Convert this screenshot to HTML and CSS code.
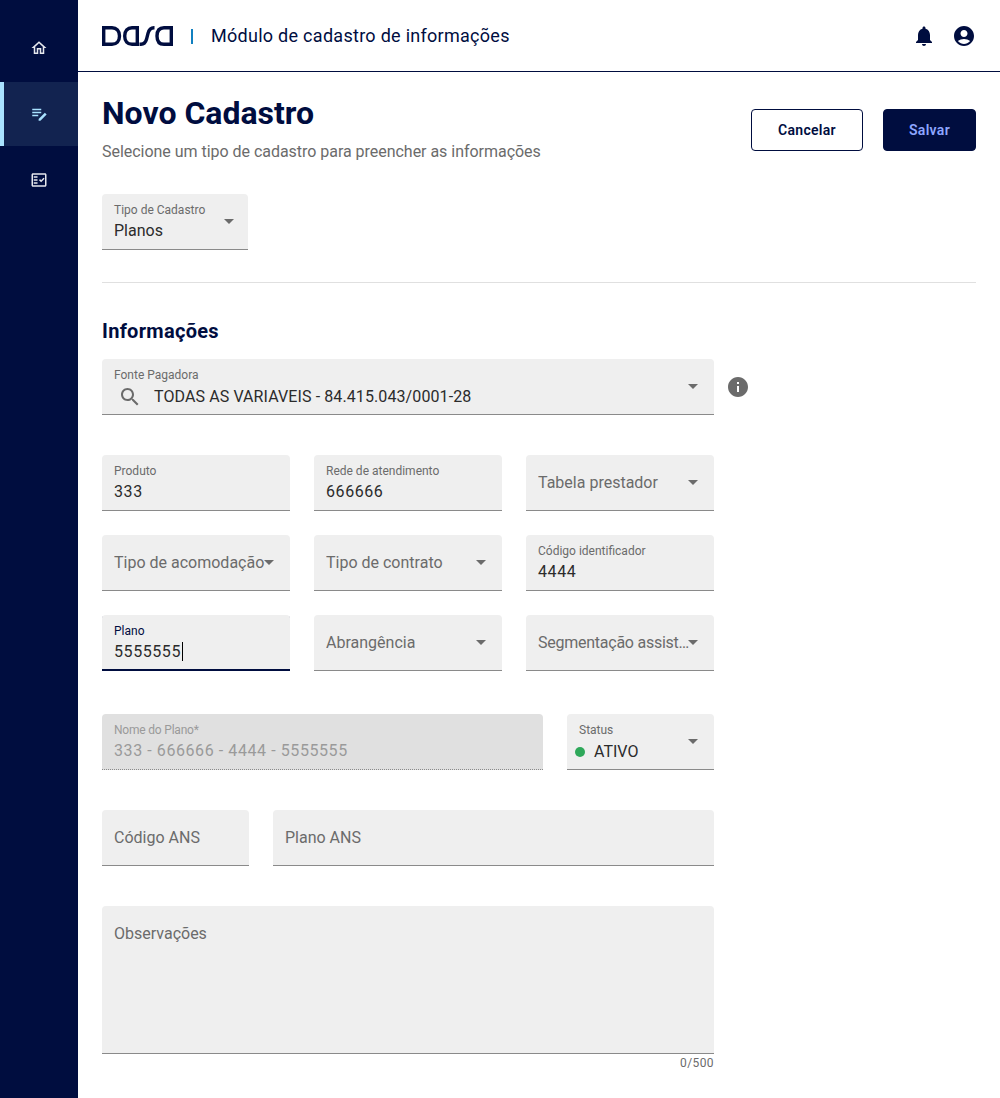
FILE: index.html
```html
<!DOCTYPE html>
<html lang="pt-BR">
<head>
<meta charset="utf-8">
<title>Novo Cadastro</title>
<link rel="stylesheet" href="styles.css">
</head>
<body>
<div class="app">
  <nav class="sidebar">
    <a class="nav-item"><svg class="icon-nav" viewBox="0 0 24 24"><path d="M12 5.690l5 4.500V18h-2v-6H9v6H7v-7.810l5-4.500M12 3L2 12h3v8h6v-6h2v6h6v-8h3L12 3z"/></svg></a>
    <a class="nav-item active"><svg class="icon-nav" viewBox="0 0 24 24"><path d="M3 5h12v2H3zM3 9h12v2H3zM3 13h8v2H3zM19.800 10.400l2.400 2.400-8.300 8.300h-2.400v-2.400z"/></svg></a>
    <a class="nav-item"><svg class="icon-nav" viewBox="0 0 24 24"><path fill-rule="evenodd" d="M20 3H4c-1.100 0-2 .9-2 2v14c0 1.100.9 2 2 2h16c1.100 0 2-.9 2-2V5c0-1.100-.9-2-2-2zm0 16H4V5h16v14z"/><path d="M19.410 10.420L17.990 9l-3.170 3.170-1.410-1.420L12 12.170 14.820 15zM5 7h5v2H5zM5 11h5v2H5zM5 15h5v2H5z"/></svg></a>
  </nav>
  <div class="content">
    <header class="topbar">
      <svg class="logo" viewBox="0 0 71 20"><path d="M1.700 1.700H10c4.500 0 7.500 3 7.500 8.300s-3 8.300-7.500 8.300H1.700z"/><path d="M35.300 1.700H30c-4.500 0-7.300 3-7.300 8.300s2.800 8.300 7.300 8.300h5.300z"/><path d="M37.500 18.300h1.500c3 0 4.500-1.500 5.500-5l1.500-6c1-3.800 2.500-5.600 6-5.600h.5"/><path d="M69.300 1.700H62c-4.500 0-7 3-7 8.300s2.500 8.300 7 8.300h7.300z"/></svg>
      <span class="brand-sep"></span>
      <span class="module-title">Módulo de cadastro de informações</span>
      <div class="top-actions">
        <svg class="icon-top" viewBox="0 0 24 24"><path d="M12 22c1.100 0 2-.9 2-2h-4c0 1.100.9 2 2 2zm6-6v-5c0-3.070-1.630-5.640-4.500-6.320V4c0-.83-.67-1.500-1.500-1.500s-1.500.67-1.500 1.500v.68C7.640 5.360 6 7.920 6 11v5l-2 2v1h16v-1l-2-2z"/></svg>
        <svg class="icon-top" viewBox="0 0 24 24"><path d="M12 2C6.480 2 2 6.480 2 12s4.480 10 10 10 10-4.480 10-10S17.520 2 12 2zm0 4c1.930 0 3.500 1.570 3.500 3.500S13.930 13 12 13s-3.500-1.570-3.500-3.500S10.070 6 12 6zm0 14c-2.030 0-4.430-.82-6.140-2.880C7.550 15.800 9.680 15 12 15s4.450.8 6.140 2.120C16.430 19.180 14.030 20 12 20z"/></svg>
      </div>
    </header>
    <main class="page">
      <div class="page-head">
        <div>
          <h1>Novo Cadastro</h1>
          <p class="subtitle">Selecione um tipo de cadastro para preencher as informações</p>
        </div>
        <div class="actions">
          <button class="btn btn-outline">Cancelar</button>
          <button class="btn btn-solid">Salvar</button>
        </div>
      </div>

      <div class="field w-type">
        <div class="field-body"><span class="label">Tipo de Cadastro</span><span class="value">Planos</span></div>
        <span class="caret"></span>
      </div>

      <hr class="divider">
      <h2>Informações</h2>

      <div class="form">
        <div class="source-row">
          <div class="field w-full">
            <div class="field-body">
              <span class="label">Fonte Pagadora</span>
              <span class="value with-icon"><svg class="icon-search" viewBox="0 0 24 24"><path d="M15.500 14h-.79l-.28-.27C15.410 12.590 16 11.110 16 9.500 16 5.910 13.090 3 9.500 3S3 5.910 3 9.500 5.910 16 9.500 16c1.610 0 3.090-.59 4.230-1.570l.27.28v.79l5 4.990L20.490 19l-4.990-5zm-6 0C7.010 14 5 11.990 5 9.500S7.010 5 9.500 5 14 7.010 14 9.500 11.990 14 9.500 14z"/></svg>TODAS AS VARIAVEIS - 84.415.043/0001-28</span>
            </div>
            <span class="caret"></span>
          </div>
          <svg class="icon-info" viewBox="0 0 24 24"><path d="M12 2C6.480 2 2 6.480 2 12s4.480 10 10 10 10-4.480 10-10S17.520 2 12 2zm1 15h-2v-6h2v6zm0-8h-2V7h2v2z"/></svg>
        </div>

        <div class="grid-3">
          <div class="field"><div class="field-body"><span class="label">Produto</span><span class="value num">333</span></div></div>
          <div class="field"><div class="field-body"><span class="label">Rede de atendimento</span><span class="value num">666666</span></div></div>
          <div class="field"><div class="field-body"><span class="placeholder">Tabela prestador</span></div><span class="caret"></span></div>
          <div class="field"><div class="field-body"><span class="placeholder">Tipo de acomodação</span></div><span class="caret"></span></div>
          <div class="field"><div class="field-body"><span class="placeholder">Tipo de contrato</span></div><span class="caret"></span></div>
          <div class="field"><div class="field-body"><span class="label">Código identificador</span><span class="value num">4444</span></div></div>
          <div class="field focused"><div class="field-body"><span class="label">Plano</span><span class="value num"><span class="typed">5555555</span></span></div></div>
          <div class="field"><div class="field-body"><span class="placeholder">Abrangência</span></div><span class="caret"></span></div>
          <div class="field"><div class="field-body"><span class="placeholder narrow">Segmentação assistencial</span></div><span class="caret"></span></div>
        </div>

        <div class="row-wide-left">
          <div class="field disabled"><div class="field-body"><span class="label">Nome do Plano*</span><span class="value num">333 - 666666 - 4444 - 5555555</span></div></div>
          <div class="field"><div class="field-body"><span class="label">Status</span><span class="value status"><i class="dot"></i>ATIVO</span></div><span class="caret"></span></div>
        </div>

        <div class="row-wide-right">
          <div class="field"><div class="field-body"><span class="placeholder">Código ANS</span></div></div>
          <div class="field"><div class="field-body"><span class="placeholder">Plano ANS</span></div></div>
        </div>

        <div class="textarea"><span class="placeholder">Observações</span></div>
        <div class="counter">0/500</div>
      </div>
    </main>
  </div>
</div>
</body>
</html>
```
FILE: styles.css
```css
* { box-sizing: border-box; }
html, body { margin: 0; padding: 0; }
body { font-family: "Roboto", "Liberation Sans", sans-serif; color: #2b2b2b; background: #fff; }
.app { display: flex; min-height: 1098px; }

.sidebar { width: 78px; flex: none; background: #000d3f; padding-top: 16px; display: flex; flex-direction: column; gap: 2px; }
.nav-item { height: 64px; display: flex; align-items: center; justify-content: center; }
.nav-item.active { background: #122350; box-shadow: inset 4px 0 0 #a9e2ff; }
.icon-nav { width: 18px; height: 18px; fill: #e6e8ee; }
.active .icon-nav { fill: #a9e2ff; }

.content { flex: 1; min-width: 0; }
.topbar { height: 72px; border-bottom: 1px solid #000d3f; padding: 0 24px; display: flex; align-items: center; }
.logo { width: 71px; height: 20px; fill: none; stroke: #000d3f; stroke-width: 3.400; }
.brand-sep { width: 2px; height: 15px; background: #1180c0; margin: 1px 18px 0; }
.module-title { font-size: 18px; line-height: 24px; color: #000d3f; letter-spacing: .28px; }
.top-actions { margin-left: auto; display: flex; gap: 16px; align-items: center; }
.icon-top { width: 24px; height: 24px; fill: #000d3f; }

.page { padding: 0 24px; }
.page-head { display: flex; justify-content: space-between; align-items: center; padding-top: 24px; }
h1 { margin: 0; font-size: 32px; line-height: 34px; font-weight: 700; color: #000d3f; }
.subtitle { margin: 10px 0 0; font-size: 16px; line-height: 24px; color: #6b6b6b; letter-spacing: -.03px; }
.actions { display: flex; gap: 20px; }
.btn { height: 42px; border-radius: 4px; font: 600 14px/20px "Roboto", "Liberation Sans", sans-serif; letter-spacing: .3px; border: 1px solid #000d3f; }
.btn-outline { width: 112px; background: #fff; color: #000d3f; }
.btn-solid { width: 93px; background: #000d3f; color: #8ea6ff; }

.field { height: 56px; min-width: 0; background: #efefef; border-bottom: 1px solid #8a8a8a; border-radius: 4px 4px 0 0; padding: 0 16px 0 12px; display: flex; align-items: center; }
.field-body { flex: 1; min-width: 0; display: flex; flex-direction: column; justify-content: center; }
.label { font-size: 12px; line-height: 16px; margin-top: 2px; color: #6b6b6b; white-space: nowrap; }
.value { font-size: 16px; line-height: 24px; color: #2b2b2b; white-space: nowrap; margin-top: 1px; }
.num { letter-spacing: .58px; }
.placeholder { font-size: 16px; line-height: 24px; color: #6b6b6b; white-space: nowrap; overflow: hidden; text-overflow: ellipsis; }
.narrow { letter-spacing: -.25px; }
.caret { flex: none; width: 0; height: 0; margin-left: -3px; border-left: 5px solid transparent; border-right: 5px solid transparent; border-top: 5px solid #6b6b6b; }

.w-type { width: 146px; margin-top: 30px; padding-right: 14px; }
.divider { border: 0; border-top: 1px solid #e0e0e0; margin: 32px 0 0; }
h2 { margin: 33px 0 15px; font-size: 20px; line-height: 30px; font-weight: 700; color: #000d3f; letter-spacing: .3px; height: 28px; }

.form { width: 646px; }
.source-row { display: flex; align-items: center; gap: 12px; }
.w-full { width: 612px; flex: none; }
.with-icon { display: flex; align-items: center; gap: 12px; padding-left: 4px; letter-spacing: .1px; transform: translateY(1px); }
.icon-search { width: 24px; height: 24px; fill: #6b6b6b; flex: none; }
.icon-info { width: 24px; height: 24px; fill: #6b6b6b; flex: none; }

.grid-3 { width: 612px; margin-top: 40px; display: grid; grid-template-columns: repeat(3, 1fr); gap: 24px; }
.focused { border-bottom-color: #000d3f; box-shadow: inset 0 -1px 0 #000d3f; }
.focused .label { color: #000d3f; }
.typed { border-right: 1px solid #000; padding-right: 1px; }

.row-wide-left, .row-wide-right { width: 612px; display: grid; gap: 24px; margin-top: 40px; }
.row-wide-left { grid-template-columns: 441px 147px; margin-top: 43px; }
.row-wide-right { grid-template-columns: 147px 441px; }
.disabled { background: #e0e0e0; border-bottom: 1px dotted #8a8a8a; }
.disabled .label, .disabled .value { color: #9a9a9a; }
.disabled .label { letter-spacing: -.2px; }
.status { display: flex; align-items: center; gap: 9px; margin-left: -4px; transform: translateY(1px); }
.dot { width: 10px; height: 10px; border-radius: 50%; background: #2ea85a; }

.textarea { width: 612px; height: 148px; margin-top: 40px; background: #efefef; border-bottom: 1px solid #8a8a8a; border-radius: 4px 4px 0 0; padding: 16px 12px; }
.counter { width: 612px; text-align: right; font-size: 12px; line-height: 16px; color: #6b6b6b; margin-top: 1px; letter-spacing: .4px; }
```
